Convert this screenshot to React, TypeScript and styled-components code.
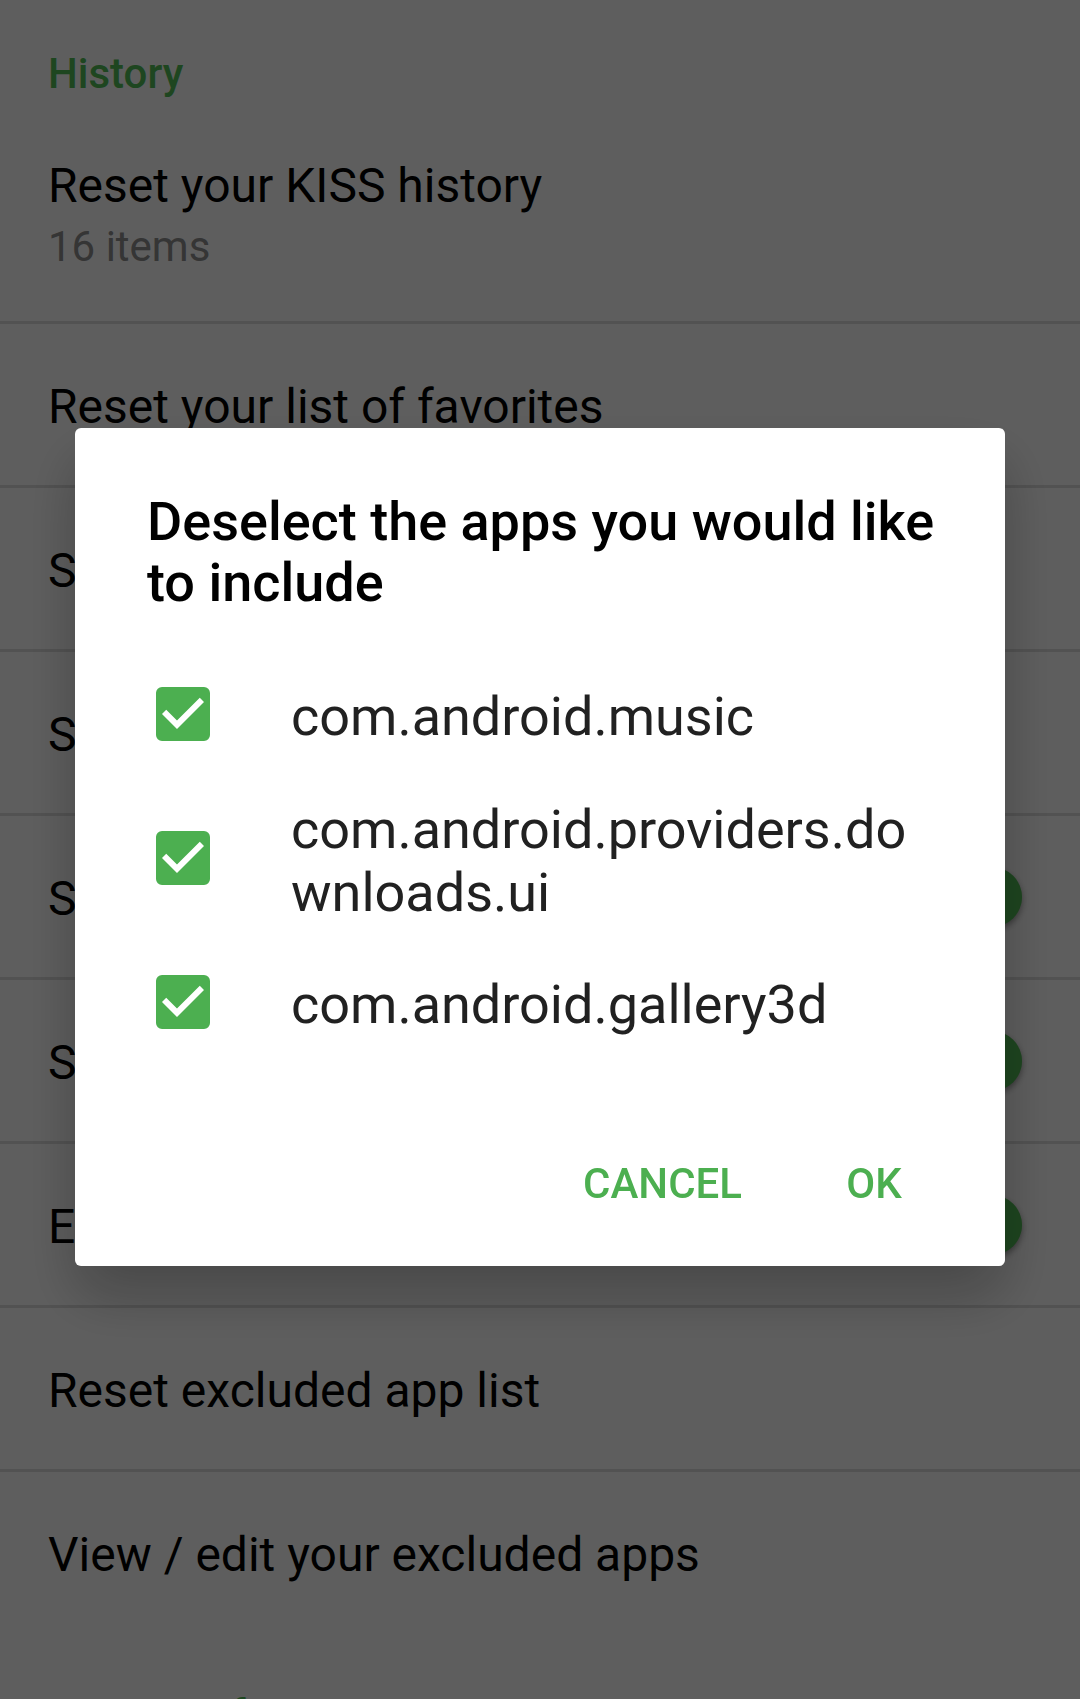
import React, { useState } from "react";
import styled, { createGlobalStyle } from "styled-components";

const GlobalStyle = createGlobalStyle`
  *, *::before, *::after { box-sizing: border-box; }
  body {
    margin: 0;
    background: #ececec;
    font-family: Roboto, "Noto Sans", sans-serif;
  }
  button, input { font: inherit; margin: 0; }
`;

const accent = "#4caf50";

const Screen = styled.main`
  height: 100vh;
  overflow: hidden;
  background: #ececec;
  color: #000;
`;

const SectionTitle = styled.h2<{ $first?: boolean }>`
  margin: 0;
  padding: ${(p) => (p.$first ? 49 : 57)}px 48px 5px;
  font-size: 42px;
  line-height: 49px;
  font-weight: 500;
  color: ${accent};
`;

const List = styled.ul`
  list-style: none;
  margin: 0;
  padding: 0;
`;

const Item = styled.li`
  & + & {
    border-top: 3px solid #cecece;
  }
`;

const ActionRow = styled.button`
  display: flex;
  flex-direction: column;
  gap: 8px;
  width: 100%;
  padding: 55px 48px 50px;
  border: 0;
  background: none;
  color: inherit;
  text-align: left;
`;

const SwitchRow = styled.label`
  display: flex;
  justify-content: space-between;
  align-items: center;
  padding: 55px 58px 50px 48px;
`;

const RowTitle = styled.span`
  font-size: 48px;
  line-height: 56px;
`;

const Summary = styled.span`
  font-size: 42px;
  line-height: 49px;
  color: #848484;
`;

const Switch = styled.input`
  appearance: none;
  display: flex;
  align-items: center;
  justify-content: flex-start;
  width: 108px;
  height: 42px;
  margin: -2px 0 2px;
  border-radius: 21px;
  background: #bdbdbd;

  &::before {
    content: "";
    width: 60px;
    height: 60px;
    flex: none;
    border-radius: 50%;
    background: #fafafa;
    box-shadow: 0 3px 6px rgba(0, 0, 0, 0.4);
  }
  &:checked {
    justify-content: flex-end;
    background: #a5d7a7;
  }
  &:checked::before {
    background: ${accent};
  }
`;

const Scrim = styled.div`
  position: fixed;
  inset: 0;
  display: flex;
  align-items: center;
  justify-content: center;
  padding: 0 75px 5px;
  background: rgba(0, 0, 0, 0.6);
`;

const Dialog = styled.section`
  width: 100%;
  padding: 63px 0 11px;
  border-radius: 6px;
  background: #fff;
  box-shadow: 0 30px 60px rgba(0, 0, 0, 0.25);
`;

const DialogTitle = styled.h1`
  margin: 0 0 29px;
  padding: 0 60px 0 72px;
  font-size: 54px;
  line-height: 61px;
  font-weight: 500;
  color: #000;
`;

const Choice = styled.label`
  display: flex;
  align-items: center;
  gap: 81px;
  min-height: 144px;
  padding: 0 72px 0 81px;
  color: #212121;
`;

const CheckFrame = styled.span`
  display: grid;
  flex: none;
  width: 54px;
  height: 54px;

  & > * {
    grid-area: 1 / 1;
  }
`;

const CheckInput = styled.input`
  appearance: none;
  width: 54px;
  height: 54px;
  border: 6px solid #757575;
  border-radius: 6px;

  &:checked {
    border-color: ${accent};
    background: ${accent};
  }
  & + svg {
    visibility: hidden;
    pointer-events: none;
  }
  &:checked + svg {
    visibility: visible;
  }
`;

const ChoiceText = styled.span`
  padding-top: 5px;
  font-size: 54px;
  line-height: 63px;
  word-break: break-all;
`;

const ButtonBar = styled.div`
  display: flex;
  justify-content: flex-end;
  margin-top: 37px;
  padding-right: 35px;
`;

const TextButton = styled.button`
  min-width: 192px;
  height: 144px;
  padding: 0 36px;
  border: 0;
  background: none;
  color: ${accent};
  font-size: 42px;
  line-height: 49px;
  font-weight: 500;
  text-transform: uppercase;
`;

type Setting = { title: string; summary?: string; toggle?: boolean };

const historySettings: Setting[] = [
  { title: "Reset your KISS history", summary: "16 items" },
  { title: "Reset your list of favorites" },
  { title: "Select search providers" },
  { title: "Select default provider" },
  { title: "Search in contacts", toggle: true },
  { title: "Search in settings", toggle: true },
  { title: "Enable phone history", toggle: true },
  { title: "Reset excluded app list" },
  { title: "View / edit your excluded apps" },
];

const excludedApps = [
  "com.android.music",
  "com.android.providers.downloads.ui",
  "com.android.gallery3d",
];

function SettingItem({ title, summary, toggle }: Setting) {
  return (
    <Item>
      {toggle ? (
        <SwitchRow>
          <RowTitle>{title}</RowTitle>
          <Switch type="checkbox" role="switch" defaultChecked />
        </SwitchRow>
      ) : (
        <ActionRow type="button">
          <RowTitle>{title}</RowTitle>
          {summary && <Summary>{summary}</Summary>}
        </ActionRow>
      )}
    </Item>
  );
}

function AppChoice({ name }: { name: string }) {
  return (
    <Choice>
      <CheckFrame>
        <CheckInput type="checkbox" defaultChecked />
        <svg width="54" height="54" viewBox="3 3 18 18" aria-hidden="true">
          <path
            fill="#fff"
            d="M10 17l-5-5 1.41-1.41L10 14.17l7.59-7.59L19 8z"
          />
        </svg>
      </CheckFrame>
      <ChoiceText>{name}</ChoiceText>
    </Choice>
  );
}

export default function App() {
  const [open, setOpen] = useState(true);
  const close = () => setOpen(false);

  return (
    <>
      <GlobalStyle />
      <Screen>
        <SectionTitle $first>History</SectionTitle>
        <List>
          {historySettings.map((s) => (
            <SettingItem key={s.title} {...s} />
          ))}
        </List>
        <SectionTitle>User interface</SectionTitle>
      </Screen>
      {open && (
        <Scrim>
          <Dialog role="dialog" aria-modal="true" aria-labelledby="dialog-title">
            <DialogTitle id="dialog-title">
              Deselect the apps you would like to include
            </DialogTitle>
            {excludedApps.map((name) => (
              <AppChoice key={name} name={name} />
            ))}
            <ButtonBar>
              <TextButton type="button" onClick={close}>
                Cancel
              </TextButton>
              <TextButton type="button" onClick={close}>
                OK
              </TextButton>
            </ButtonBar>
          </Dialog>
        </Scrim>
      )}
    </>
  );
}
